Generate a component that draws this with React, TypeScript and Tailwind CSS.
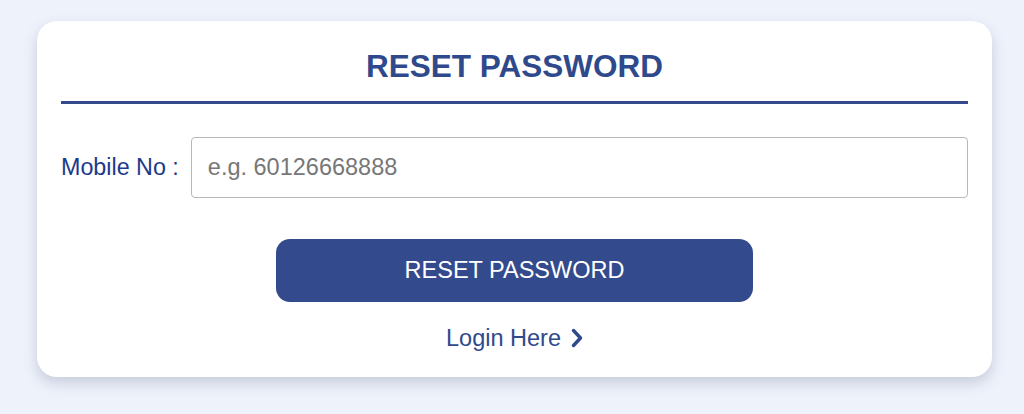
import React from "react";

export default function App() {
  return (
    <div
      className="w-[1024px] h-[414px] bg-[#eef2fb] pt-[21px] px-[37px]"
      style={{ fontFamily: '"Liberation Sans", Arial, sans-serif' }}
    >
      <div className="w-[955px] h-[356px] bg-white rounded-[20px] shadow-[0_6px_14px_rgba(60,75,110,0.22)] px-[24px] pt-[24px]">
        <h1 className="text-center text-[31.5px] leading-[42px] font-bold text-[#2f4a8c]">
          RESET PASSWORD
        </h1>
        <div className="mt-[14px] h-[3px] bg-[#33498c]" />
        <div className="mt-[33px] flex items-center gap-[12px]">
          <label className="text-[23.3px] text-[#1d3a8a] whitespace-nowrap">Mobile No :</label>
          <input
            className="flex-1 h-[61px] border border-[#b8b8b8] rounded-[4px] px-[16px] text-[23.5px] text-[#333] placeholder:text-[#777] outline-none"
            placeholder="e.g. 60126668888"
          />
        </div>
        <div className="mt-[41px] flex justify-center">
          <button className="w-[477px] h-[63px] rounded-[14px] bg-[#334a8c] text-white text-[23.5px]">
            RESET PASSWORD
          </button>
        </div>
        <div className="mt-[24px] flex justify-center items-center gap-[10px] text-[23.5px] leading-[24px] text-[#2f4a8c]">
          <span>Login Here</span>
          <svg width="12" height="20" viewBox="0 0 12 20" fill="none">
            <polyline points="2.5,2.5 9.5,10 2.5,17.5" stroke="#2f4a8c" strokeWidth="3.4" strokeLinecap="round" strokeLinejoin="round" />
          </svg>
        </div>
      </div>
    </div>
  );
}
